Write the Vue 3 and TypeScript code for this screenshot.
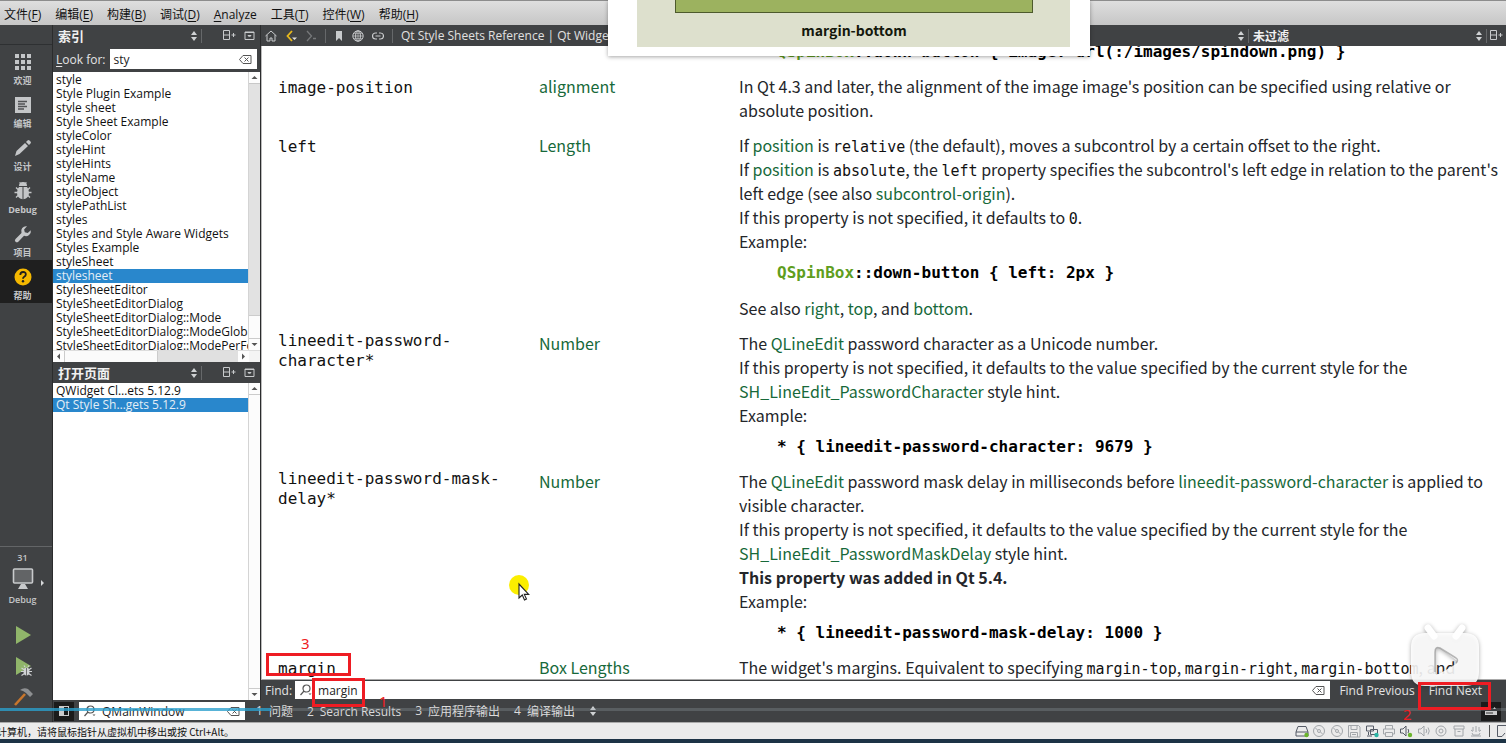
<script setup lang="ts">
import { ref } from 'vue'

interface MenuEntry { text: string; key?: string }
interface Mode { id: string; label: string }
interface Pane { n: number; label: string }

const menus: MenuEntry[] = [
  { text: '文件', key: 'F' },
  { text: '编辑', key: 'E' },
  { text: '构建', key: 'B' },
  { text: '调试', key: 'D' },
  { text: 'Analyze' },
  { text: '工具', key: 'T' },
  { text: '控件', key: 'W' },
  { text: '帮助', key: 'H' },
]

const modes: Mode[] = [
  { id: 'welcome', label: '欢迎' },
  { id: 'edit', label: '编辑' },
  { id: 'design', label: '设计' },
  { id: 'debug', label: 'Debug' },
  { id: 'projects', label: '项目' },
  { id: 'help', label: '帮助' },
]
const activeMode = ref('help')

const keywords: string[] = [
  'style', 'Style Plugin Example', 'style sheet', 'Style Sheet Example', 'styleColor',
  'styleHint', 'styleHints', 'styleName', 'styleObject', 'stylePathList', 'styles',
  'Styles and Style Aware Widgets', 'Styles Example', 'styleSheet', 'stylesheet',
  'StyleSheetEditor', 'StyleSheetEditorDialog', 'StyleSheetEditorDialog::Mode',
  'StyleSheetEditorDialog::ModeGlobal', 'StyleSheetEditorDialog::ModePerForm',
]
const activeKeyword = ref('stylesheet')

const openPages: string[] = ['QWidget Cl…ets 5.12.9', 'Qt Style Sh…gets 5.12.9']
const activePage = ref(1)

const panes: Pane[] = [
  { n: 1, label: '问题' },
  { n: 2, label: 'Search Results' },
  { n: 3, label: '应用程序输出' },
  { n: 4, label: '编译输出' },
]

const lookFor = ref('sty')
const findText = ref('margin')
const locator = ref('QMainWindow')
</script>

<template>
  <div class="app">
    <nav class="menubar">
      <button v-for="m in menus" :key="m.text" class="menu">
        <template v-if="m.key">{{ m.text }}(<u>{{ m.key }}</u>)</template>
        <template v-else><u>{{ m.text[0] }}</u>{{ m.text.slice(1) }}</template>
      </button>
    </nav>

    <div class="main">
      <aside class="modes">
        <div class="modes-top"></div>
        <button
          v-for="m in modes"
          :key="m.id"
          class="mode"
          :class="{ active: activeMode === m.id }"
          @click="activeMode = m.id"
        >
          <svg v-if="m.id === 'welcome'" width="20" height="20" viewBox="0 0 20 20" fill="#c4c6c8">
            <path d="M2 2h4v4H2zM8 2h4v4H8zM14 2h4v4h-4zM2 8h4v4H2zM8 8h4v4H8zM14 8h4v4h-4zM2 14h4v4H2zM8 14h4v4H8zM14 14h4v4h-4z" />
          </svg>
          <svg v-else-if="m.id === 'edit'" width="20" height="20" viewBox="0 0 20 20">
            <rect x="2" y="2" width="16" height="16" fill="#c4c6c8" />
            <path d="M5 6.500h9M5 9h7M5 11.500h9M5 14h6" stroke="#505254" stroke-width="1.600" />
          </svg>
          <svg v-else-if="m.id === 'design'" width="20" height="20" viewBox="0 0 20 20" fill="#c4c6c8">
            <path d="M2 18l1.500-5L12 5l3 3-8.500 8zM13 4l1.500-1.500q1-1 2 0l1 1q1 1 0 2L16 7z" />
          </svg>
          <svg v-else-if="m.id === 'debug'" width="20" height="20" viewBox="0 0 20 20" fill="#c4c6c8">
            <path d="M6 5a4 4 0 018 0zM9.500 6v12.200Q4 17.500 4 11.500 4 8 6 6zM10.500 6v12.200Q16 17.500 16 11.500 16 8 14 6z" />
            <path d="M5 8.500L3 6.500M5 11.500H1.500M5 14.500L3 16.500M15 8.500l2-2M15 11.500h3.500M15 14.500l2 2M8 2.500L6.500 1.500M12 2.500l1.500-1" stroke="#c4c6c8" stroke-width="1.300" />
          </svg>
          <svg v-else-if="m.id === 'projects'" width="20" height="20" viewBox="0 0 20 20" fill="#c4c6c8">
            <path d="M14 2.300a5 5 0 00-5.500 6.800L2.500 15q-1.300 1.500 0 2.700t2.800 0L11 11.800a5 5 0 006.800-5.600L14.700 9l-2.900-.700-.700-2.900z" />
          </svg>
          <svg v-else width="20" height="20" viewBox="0 0 20 20">
            <circle cx="10" cy="10" r="8.500" fill="#f5b800" />
            <path d="M7.300 8q0-3 2.800-3t2.700 2.500q0 1.300-1.600 2.300-1.200.800-1.200 2" fill="none" stroke="#1f1f1f" stroke-width="1.800" />
            <circle cx="10" cy="14.200" r="1.200" fill="#1f1f1f" />
          </svg>
          <span>{{ m.label }}</span>
        </button>
        <div class="grow"></div>
        <div class="kit">
          <span>31</span>
          <button class="kit-button" aria-label="Kit">
            <svg width="44" height="24" viewBox="0 0 44 24">
              <rect x="9.500" y="2" width="19" height="14" rx="1" fill="#626466" stroke="#c8cacc" stroke-width="1.600" />
              <path d="M17 17h4l3 5H14z" fill="#c8cacc" />
              <path d="M37 13v6l3-3z" fill="#d5d7d9" />
            </svg>
          </button>
          <span>Debug</span>
        </div>
        <button class="run" aria-label="Run">
          <svg width="20" height="20" viewBox="0 0 20 20"><path d="M3 1v18l15-9z" fill="#90b56a" /></svg>
        </button>
        <button class="run" aria-label="Start debugging">
          <svg width="20" height="20" viewBox="0 0 20 20">
            <path d="M3 0v18l15-9z" fill="#90b56a" />
            <ellipse cx="13.500" cy="14.500" rx="3" ry="4" fill="#d0d2d4" />
            <path d="M8.500 11l3 2M8 14.500h11M8.500 18.500l3-2M18.500 11l-3 2M18.500 18.500l-3-2M12 10l-1-1.500M15 10l1-1.500" stroke="#d0d2d4" stroke-width="1.200" />
            <path d="M13.500 11v8" stroke="#555" stroke-width=".800" />
          </svg>
        </button>
        <button class="build" aria-label="Build">
          <svg width="22" height="20" viewBox="0 0 22 20">
            <path d="M3 18L13 7" stroke="#c8762c" stroke-width="2.600" />
            <path d="M8 3q4-3 8-1l5 5-3 3-4-4q-2-2-6-3z" fill="#8d8f91" />
          </svg>
        </button>
      </aside>

      <div class="right">
        <div class="body">
          <section class="side">
            <header class="bar side-bar">
              <b class="title">索引</b>
              <svg class="updown" width="8" height="10" viewBox="0 0 8 10"><path d="M4 0l3 4H1zM4 10l3-4H1z" /></svg>
              <i class="sep"></i>
              <button class="tool split" aria-label="Split">
                <svg width="13" height="11" viewBox="0 0 13 11"><path d="M.500.500h6v9h-6zM.500 5h6M8.500 5h4M10.500 3v4" /></svg>
              </button>
              <button class="tool close" aria-label="Close">
                <svg width="11" height="11" viewBox="0 0 11 11"><path d="M1 2h9v7.500H1z" /><path d="M1 2.500h9M4 5.500h3l-1.500 1.500z" /></svg>
              </button>
            </header>
            <div class="look">
              <label for="look"><u>L</u>ook for:</label>
              <div class="field">
                <input id="look" v-model="lookFor" type="text" />
                <button class="clear" aria-label="Clear">
                  <svg width="13" height="9" viewBox="0 0 13 9"><path d="M4 .500h8v8H4l-3.500-4zM5.500 2.500l4 4M9.500 2.500l-4 4" /></svg>
                </button>
              </div>
            </div>
            <div class="listbox index-list">
              <ul>
                <li v-for="k in keywords" :key="k" :class="{ on: k === activeKeyword }" @click="activeKeyword = k">{{ k }}</li>
              </ul>
              <div class="vscroll">
                <svg class="arrow" width="11" height="11" viewBox="0 0 11 11"><path d="M2.500 7h6l-3-3z" /></svg>
                <div class="groove"></div>
                <div class="thumb"></div>
                <svg class="arrow" width="11" height="11" viewBox="0 0 11 11"><path d="M2.500 4h6l-3 3z" /></svg>
              </div>
            </div>
            <div class="hscroll">
              <svg width="11" height="11" viewBox="0 0 11 11"><path d="M7 2.500v6l-3-3z" /></svg>
              <div class="hthumb"></div>
              <div class="hgroove"></div>
              <svg width="11" height="11" viewBox="0 0 11 11"><path d="M4 2.500v6l3-3z" /></svg>
              <div class="corner"></div>
            </div>
            <header class="bar side-bar">
              <b class="title">打开页面</b>
              <svg class="updown" width="8" height="10" viewBox="0 0 8 10"><path d="M4 0l3 4H1zM4 10l3-4H1z" /></svg>
              <i class="sep"></i>
              <button class="tool split" aria-label="Split">
                <svg width="13" height="11" viewBox="0 0 13 11"><path d="M.500.500h6v9h-6zM.500 5h6M8.500 5h4M10.500 3v4" /></svg>
              </button>
              <button class="tool close" aria-label="Close">
                <svg width="11" height="11" viewBox="0 0 11 11"><path d="M1 2h9v7.500H1z" /><path d="M1 2.500h9M4 5.500h3l-1.500 1.500z" /></svg>
              </button>
            </header>
            <div class="listbox pages-list">
              <ul>
                <li v-for="(p, i) in openPages" :key="p" :class="{ on: i === activePage }" @click="activePage = i">{{ p }}</li>
              </ul>
              <div class="vscroll">
                <svg class="arrow" width="11" height="11" viewBox="0 0 11 11"><path d="M2.500 7h6l-3-3z" /></svg>
                <div class="thumb full"></div>
                <svg class="arrow" width="11" height="11" viewBox="0 0 11 11"><path d="M2.500 4h6l-3 3z" /></svg>
              </div>
            </div>
          </section>

          <section class="doc">
            <header class="bar doc-bar">
              <button class="tool" aria-label="Home">
                <svg width="12" height="12" viewBox="0 0 12 12"><path d="M.500 6L6 1l5.500 5M2 5v6h3V8h2v3h3V5" /></svg>
              </button>
              <button class="tool back" aria-label="Back">
                <svg width="12" height="12" viewBox="0 0 12 12"><path d="M7 1L2.500 6 7 11" stroke-width="1.800" /><path d="M7 7.500h5L9.500 10z" /></svg>
              </button>
              <button class="tool dim" aria-label="Forward">
                <svg width="12" height="12" viewBox="0 0 12 12"><path d="M2 1l4.500 5L2 11M8 8.500h3" stroke-width="1.300" /></svg>
              </button>
              <i class="sep"></i>
              <button class="tool mark-tool" aria-label="Bookmark">
                <svg width="10" height="12" viewBox="0 0 10 12"><path d="M2 1h6v10L5 8l-3 3z" /></svg>
              </button>
              <button class="tool" aria-label="Online">
                <svg width="12" height="12" viewBox="0 0 12 12"><circle cx="6" cy="6" r="5.200" /><ellipse cx="6" cy="6" rx="2.400" ry="5.200" /><path d="M1 6h10M6 1v10M2 3.300h8M2 8.700h8" stroke-width=".700" /></svg>
              </button>
              <button class="tool" aria-label="Link">
                <svg width="12" height="12" viewBox="0 0 12 12"><path d="M5 3H3.500a3 3 0 000 6H5M7 3h1.500a3 3 0 010 6H7M3.500 6h5" stroke-width="1.200" /></svg>
              </button>
              <i class="sep"></i>
              <span class="page-title">Qt Style Sheets Reference | Qt Widgets 5.12.9</span>
              <svg class="updown" width="8" height="10" viewBox="0 0 8 10"><path d="M4 0l3 4H1zM4 10l3-4H1z" /></svg>
              <i class="sep"></i>
              <b class="filter">未过滤</b>
              <svg class="updown" width="8" height="10" viewBox="0 0 8 10"><path d="M4 0l3 4H1zM4 10l3-4H1z" /></svg>
              <i class="sep"></i>
              <button class="tool" aria-label="Split">
                <svg width="13" height="11" viewBox="0 0 13 11"><path d="M.500.500h6v9h-6zM.500 5h6M8.500 5h4M10.500 3v4" /></svg>
              </button>
            </header>

            <div class="view">
              <table>
                <colgroup><col class="c-name" /><col class="c-type" /><col /></colgroup>
                <tbody>
                  <tr>
                    <td></td>
                    <td></td>
                    <td><pre class="first"><span class="cls">QSpinBox</span>::down-button { image: url(:/images/spindown.png) }</pre></td>
                  </tr>
                  <tr>
                    <td><code>image-position</code></td>
                    <td><a href="#alignment">alignment</a></td>
                    <td>In Qt 4.3 and later, the alignment of the image image's position can be specified using relative or<br />absolute position.</td>
                  </tr>
                  <tr>
                    <td><code>left</code></td>
                    <td><a href="#length">Length</a></td>
                    <td>
                      <p>If <a href="#position">position</a> is <code>relative</code> (the default), moves a subcontrol by a certain offset to the right.</p>
                      <p>If <a href="#position">position</a> is <code>absolute</code>, the <code>left</code> property specifies the subcontrol's left edge in relation to the parent's<br />left edge (see also <a href="#subcontrol-origin">subcontrol-origin</a>).</p>
                      <p>If this property is not specified, it defaults to <code>0</code>.</p>
                      <p>Example:</p>
                      <pre><span class="cls">QSpinBox</span>::down-button { left: 2px }</pre>
                      <p class="after">See also <a href="#right">right</a>, <a href="#top">top</a>, and <a href="#bottom">bottom</a>.</p>
                    </td>
                  </tr>
                  <tr>
                    <td class="wrapped"><code>lineedit-password-<br />character*</code></td>
                    <td><a href="#number">Number</a></td>
                    <td>
                      <p>The <a href="#qlineedit">QLineEdit</a> password character as a Unicode number.</p>
                      <p>If this property is not specified, it defaults to the value specified by the current style for the<br /><a href="#char">SH_LineEdit_PasswordCharacter</a> style hint.</p>
                      <p>Example:</p>
                      <pre>* { lineedit-password-character: 9679 }</pre>
                    </td>
                  </tr>
                  <tr>
                    <td class="wrapped"><code>lineedit-password-mask-<br />delay*</code></td>
                    <td><a href="#number">Number</a></td>
                    <td>
                      <p>The <a href="#qlineedit">QLineEdit</a> password mask delay in milliseconds before <a href="#lpc">lineedit-password-character</a> is applied to<br />visible character.</p>
                      <p>If this property is not specified, it defaults to the value specified by the current style for the<br /><a href="#delay">SH_LineEdit_PasswordMaskDelay</a> style hint.</p>
                      <p><b>This property was added in Qt 5.4.</b></p>
                      <p>Example:</p>
                      <pre>* { lineedit-password-mask-delay: 1000 }</pre>
                    </td>
                  </tr>
                  <tr>
                    <td><code>margin</code></td>
                    <td><a href="#box-lengths">Box Lengths</a></td>
                    <td><p>The widget's margins. Equivalent to specifying <code>margin-top</code>, <code>margin-right</code>, <code>margin-bottom</code>, and</p></td>
                  </tr>
                </tbody>
              </table>
            </div>

            <div class="findbar">
              <label for="find">Find:</label>
              <div class="field">
                <svg class="lens" width="14" height="12" viewBox="0 0 14 12"><circle cx="7.500" cy="4.500" r="3.500" /><path d="M5 7L1.500 11" /><path d="M9.500 9.500h3l-1.500 1.500z" class="solid" /></svg>
                <input id="find" v-model="findText" type="text" />
                <button class="clear" aria-label="Clear">
                  <svg width="13" height="9" viewBox="0 0 13 9"><path d="M4 .500h8v8H4l-3.500-4zM5.500 2.500l4 4M9.500 2.500l-4 4" /></svg>
                </button>
              </div>
              <button class="find-btn">Find Previous</button>
              <button class="find-btn">Find Next</button>
            </div>
          </section>
        </div>

        <footer class="output">
          <button class="black" aria-label="Toggle sidebar">
            <svg width="10" height="10" viewBox="0 0 10 10"><rect x=".500" y=".500" width="9" height="9" fill="#1b1b1b" stroke="#ccc" /><path d="M1 1h4v8H1z" fill="#ccc" /></svg>
          </button>
          <div class="field locator">
            <svg class="lens" width="14" height="12" viewBox="0 0 14 12"><circle cx="7.500" cy="4.500" r="3.500" /><path d="M5 7L1.500 11" /><path d="M9.500 9.500h3l-1.500 1.500z" class="solid" /></svg>
            <input v-model="locator" type="text" aria-label="Locator" />
            <button class="clear" aria-label="Clear">
              <svg width="13" height="9" viewBox="0 0 13 9"><path d="M4 .500h8v8H4l-3.500-4zM5.500 2.500l4 4M9.500 2.500l-4 4" /></svg>
            </button>
          </div>
          <button v-for="p in panes" :key="p.n" class="pane"><span>{{ p.n }}</span><span>{{ p.label }}</span></button>
          <svg class="updown" width="8" height="10" viewBox="0 0 8 10"><path d="M4 0l3 4H1zM4 10l3-4H1z" /></svg>
          <div class="grow"></div>
          <button class="black end" aria-label="Toggle output">
            <svg width="12" height="10" viewBox="0 0 12 10"><path d="M0 5h12v4H0z" fill="#ccc" /><path d="M1 7h7" stroke="#333" /><path d="M8 3l1.500-2L11 3z" fill="#ccc" /></svg>
          </button>
        </footer>
      </div>
    </div>

    <div class="status">
      <span class="hint">计算机，请将鼠标指针从虚拟机中移出或按 Ctrl+Alt。</span>
      <div class="grow"></div>
      <div class="devices">
        <svg width="14" height="14" viewBox="0 0 14 14"><path d="M3 2.500h8l2 5.500v4H1V8zM1 8h12" class="strong" /><circle cx="11.500" cy="11" r="2.200" fill="#6ab52c" stroke="none" /></svg>
        <svg width="14" height="14" viewBox="0 0 14 14"><circle cx="7" cy="7" r="5.500" /><circle cx="7" cy="7" r="1.500" /><path d="M3.500 4l2 2M8.500 8l2 2" /></svg>
        <svg width="14" height="14" viewBox="0 0 14 14"><circle cx="7" cy="7" r="5.500" /><circle cx="7" cy="7" r="1.500" /><path d="M3.500 4l2 2M8.500 8l2 2" /></svg>
        <svg width="14" height="14" viewBox="0 0 14 14"><path d="M1.500 1.500h10l1.500 1.500v10H1.500zM4 1.500v4h6v-4M3.500 13V8.500h7V13M5 10.500h4" /></svg>
        <svg width="14" height="14" viewBox="0 0 14 14"><path d="M1.500 2h7v5h-7zM5.500 5.500h7v5h-7zM2 12h5M3.500 8v3" class="strong" /><circle cx="11.500" cy="11" r="2.200" fill="#2bb5a5" stroke="none" /></svg>
        <svg width="14" height="14" viewBox="0 0 14 14"><path d="M3.500 5V1.500h7V5M3.500 10h-2V5h11v5h-2M3.500 8.500h7v4h-7z" /></svg>
        <svg width="14" height="14" viewBox="0 0 14 14"><path d="M1.500 5H4l3-3v10L4 9H1.500zM9 5q1.500 2 0 4" class="strong" /><circle cx="11" cy="11" r="2.200" fill="#6ab52c" stroke="none" /></svg>
        <svg width="14" height="14" viewBox="0 0 14 14"><path d="M1.500 5H4l3-3v10L4 9H1.500zM9 5q1.500 2 0 4M11 3.500q2.500 3.500 0 7" /></svg>
        <svg width="14" height="14" viewBox="0 0 14 14"><circle cx="7" cy="7" r="5" /><circle cx="7" cy="7" r="2" /></svg>
        <svg width="14" height="14" viewBox="0 0 14 14"><path d="M2 2h10v3H2zM3 5v7h8V5M5.500 7.500h3" /></svg>
        <svg width="14" height="14" viewBox="0 0 14 14"><path d="M2 12h10M3 9l1 2h6l1-2M4 3v4M7 2v6M10 3v4M2 6l2 1.500M12 6l-2 1.500" /></svg>
      </div>
      <i class="status-sep"></i>
      <svg class="note" width="10" height="14" viewBox="0 0 10 14"><path d="M10 1.500H1.500v11H6L9 9" /></svg>
    </div>
    <div class="taskbar"></div>

    <!-- box-model figure floating above the page -->
    <figure class="figure">
      <div class="figure-margin">
        <div class="figure-border"></div>
        <figcaption>margin-bottom</figcaption>
      </div>
    </figure>

    <!-- pointer with click highlight -->
    <svg class="pointer" width="24" height="30" viewBox="0 0 24 30">
      <circle cx="11" cy="11" r="10" fill="#fbee00" />
      <path d="M11 10v14l3.300-3 2.200 5 2-1-2.200-4.600h4.400z" fill="#fff" stroke="#222" stroke-width="1.100" />
    </svg>

    <!-- playback progress -->
    <div class="progress"><div class="played"></div></div>

    <svg class="player" width="80" height="74" viewBox="0 0 80 74">
      <g fill="#fff" fill-opacity=".88" stroke="none">
        <path d="M23 9l6 8M57 9l-6 8" stroke="#fff" stroke-width="7" stroke-linecap="round" />
        <path fill-rule="evenodd" d="M20 14h40q14 0 14 14v25q0 14-14 14H20Q6 67 6 53V28q0-14 14-14zM30 33v20q0 4 4 2l17-10q3-2 0-4L35 29q-5-2-5 4z" />
      </g>
      <path d="M30 53V33q0-6 5-4l16 10q3 2 0 5" fill="none" stroke="#999" stroke-opacity=".7" stroke-width="1.500" />
    </svg>

    <div class="mark mark-a"></div>
    <div class="mark mark-b"></div>
    <div class="mark mark-c"></div>
    <span class="num num-1">1</span>
    <span class="num num-2">2</span>
    <span class="num num-3">3</span>
  </div>
</template>

<style>
html, body { margin: 0; overflow: hidden; }
</style>

<style scoped>
* { box-sizing: border-box; }
.app {
  position: relative;
  display: flex;
  flex-direction: column;
  height: 100vh;
  overflow: hidden;
  background: #404244;
  font-family: "Open Sans", "Noto Sans CJK SC", sans-serif;
  font-size: 12px;
  color: #111;
}
button { border: 0; padding: 0; margin: 0; background: none; font: inherit; color: inherit; white-space: nowrap; }
svg { display: block; flex: none; }
.grow { flex: 1; }

.menubar {
  display: flex;
  flex: none;
  gap: 14px;
  height: 25px;
  padding: 3px 4px 0;
  border-top: 1px solid #8c8c8c;
  background: linear-gradient(#dedede, #c6c6c6);
  line-height: 20px;
}
u { text-underline-offset: 2px; }

.main { display: flex; flex: 1; min-height: 0; }
.modes { display: flex; flex: none; flex-direction: column; width: 53px; padding-right: 7px; border-right: 1px solid #2b2c2d; color: #c4c6c8; font-size: 9px; font-weight: 700; }
.modes-top { flex: none; height: 20px; margin-right: -7px; border-bottom: 1px solid #2e3032; }
.mode { display: flex; flex: none; flex-direction: column; align-items: center; gap: 2px; height: 43px; margin-right: -7px; padding: 7px 7px 0 0; line-height: 14px; }
.mode.active { background: #1f1f1f; }
.kit { display: flex; flex: none; flex-direction: column; align-items: center; height: 65px; margin: 0 -7px 8px 0; padding: 4px 7px 0 0; border-top: 1px solid #636567; line-height: 14px; font-weight: 600; }
.kit-button { margin: 2px 0 2px 7px; }
.run, .build { display: flex; flex: none; justify-content: center; align-items: center; height: 32px; }
.build { height: 39px; align-items: flex-start; padding-top: 4px; }

.right { display: flex; flex: 1; flex-direction: column; min-width: 0; }
.body { display: flex; flex: 1; min-height: 0; }
.bar { display: flex; flex: none; align-items: center; height: 21px; color: #f0f0f0; }
.updown { fill: #d0d2d4; }
.sep { flex: none; width: 1px; height: 14px; background: #66686a; }
.tool svg { fill: none; stroke: #c8cacc; }
.tool.back path:first-child { stroke: #e8b91c; }
.tool.back path:last-child { fill: #e0e0e0; stroke: none; }
.tool.dim path { stroke: #76787a; }
.tool.mark-tool path { fill: #c8cacc; stroke: none; }

.side { display: flex; flex: none; flex-direction: column; width: 208px; border-right: 1px solid #2b2c2d; }
.side-bar { gap: 3px; padding: 0 5px; }
.side-bar .title { flex: 1; font-size: 13px; }
.side-bar .split { margin-left: 18px; }
.side-bar .close { margin-left: 5px; }
.look { display: flex; flex: none; align-items: center; gap: 5px; height: 26px; padding: 0 3px; color: #e4e4e4; }
.field { display: flex; flex: 1; align-items: center; height: 20px; min-width: 0; background: #fff; }
.field input { flex: 1; min-width: 0; height: 18px; padding: 0 0 0 3px; border: 0; outline: 0; background: none; font: inherit; color: #222; }
.lens + input { padding-left: 5px; }
.clear { margin-right: 5px; }
.clear svg { fill: none; stroke: #555; }
.lens { margin-left: 4px; fill: none; stroke: #555; stroke-width: 1.2; }
.lens .solid { fill: #555; stroke: none; }

.listbox { display: flex; background: #fff; overflow: hidden; }
.index-list { flex: none; height: 278px; }
.pages-list { flex: 1; min-height: 0; }
.listbox ul { flex: 1; min-width: 0; margin: 0; padding: 1px 0 0; list-style: none; overflow: hidden; }
.listbox li { height: 14px; padding-left: 3px; line-height: 14px; white-space: nowrap; }
.listbox li.on { background: #2987cc; color: #e4eef6; }
.vscroll { display: flex; flex: none; flex-direction: column; width: 12px; border-left: 1px solid #d4d4d4; background: #f6f6f6; }
.arrow, .hscroll svg { fill: #555; background: #fdfdfd; }
.groove { flex: 1; border-top: 1px solid #c8c8c8; background: #e2e2e2; }
.thumb { height: 24px; border: solid #ccc; border-width: 1px 0; background: #fcfcfc; }
.thumb.full { flex: 1; height: auto; }
.hscroll { display: flex; flex: none; height: 12px; border-top: 1px solid #ddd; background: #f4f4f4; }
.hthumb { flex: 93; border: solid #ccc; border-width: 0 1px; background: #fbfbfb; }
.hgroove { flex: 81; background: #e0e0e0; }
.corner { width: 11px; }

.doc { display: flex; flex: 1; flex-direction: column; min-width: 0; }
.doc-bar { gap: 8px; padding: 0 3px 0 4px; }
.doc-bar .updown { margin-right: -5px; }
.doc-bar .tool:last-child { margin-left: -5px; }
.page-title { flex: 1; color: #e0e0e0; white-space: nowrap; }
.filter { width: 214px; margin-left: -4px; }
.view { flex: 1; min-height: 0; overflow: hidden; border-left: 1px solid #bbb; border-bottom: 1px solid #aaa; background: #fff; }
table { width: 100%; margin-top: -5px; border-collapse: collapse; table-layout: fixed; font-family: "Noto Sans CJK SC", sans-serif; font-size: 16px; line-height: 24px; color: #24262a; }
.c-name { width: 277px; }
.c-type { width: 200px; }
td { padding: 0 0 11px; vertical-align: top; white-space: nowrap; }
td:first-child { padding-left: 16px; }
td p { margin: 0; }
td a { color: #17693a; text-decoration: none; }
code, pre { font-family: "DejaVu Sans Mono", monospace; font-size: 16px; color: #111; }
code { line-height: 20px; }
p code { font-size: 15px; }
.wrapped { font-family: "DejaVu Sans Mono", monospace; line-height: 20px; }
pre { margin: 9px 0 0 38px; line-height: 22px; font-weight: 700; color: #000; }
pre.first { margin-top: 0; }
.cls { color: #5f9e1e; }
.after { margin-top: 12px; }

.findbar { display: flex; flex: none; align-items: center; height: 20px; padding: 0 24px 0 4px; color: #e4e4e4; }
.findbar .field { margin: 0 9px 0 3px; height: 18px; }
.find-btn + .find-btn { margin-left: 14px; }

.output { display: flex; flex: none; align-items: center; height: 22px; color: #dcdcdc; }
.black { display: flex; flex: none; align-items: center; justify-content: center; width: 20px; height: 19px; margin-left: 1px; background: #1b1b1b; }
.black.end { margin-right: 5px; }
.locator { flex: none; width: 166px; height: 18px; margin: 0 11px 0 5px; }
.pane { display: flex; gap: 6px; margin-right: 14px; }

.status { display: flex; flex: none; align-items: center; height: 17px; border-top: 1px solid #aaa; background: #ebebeb; overflow: hidden; }
.hint { margin-left: -3px; font-family: "Noto Sans CJK SC", sans-serif; font-size: 10px; white-space: nowrap; }
.devices { display: flex; justify-content: space-between; width: 188px; fill: none; stroke: #a2a6aa; }
.devices .strong { stroke: #555b66; }
.status-sep { width: 1px; height: 12px; margin: 0 6px; background: #555; }
.note { fill: none; stroke: #555b66; }
.taskbar { flex: none; height: 4px; background: #1d3346; }

.figure { position: absolute; top: 0; left: 608px; width: 482px; height: 56px; margin: 0; padding: 0 20px 9px 29px; background: #fff; box-shadow: 0 1px 4px rgba(0, 0, 0, .35); }
.figure-margin { height: 47px; padding: 0 37px 0 38px; background: #dde0cd; text-align: center; }
.figure-border { height: 13px; border: 1px solid #4d5a2c; border-top: 0; background: #9cb25f; }
figcaption { font-family: "Noto Sans CJK SC", sans-serif; font-size: 14px; font-weight: 700; line-height: 34px; color: #14180c; }
.pointer { position: absolute; left: 508px; top: 574px; }
.progress { position: absolute; left: 0; right: 0; bottom: 32px; height: 3px; background: rgba(150, 160, 165, .3); }
.played { width: 18%; height: 3px; background: rgba(30, 160, 210, .7); }
.player { position: absolute; right: 21px; bottom: 50px; filter: drop-shadow(0 1px 2px rgba(0, 0, 0, .35)); }
.mark { position: absolute; border: 3px solid #ee1c23; }
.mark-a { left: 266px; top: 653px; width: 85px; height: 23px; }
.mark-b { left: 312px; top: 678px; width: 53px; height: 29px; }
.mark-c { left: 1418px; top: 682px; width: 73px; height: 28px; }
.num { position: absolute; font-family: "Noto Sans", sans-serif; font-size: 15px; line-height: 16px; color: #ee1c23; }
.num-1 { left: 379px; top: 693px; }
.num-2 { left: 1403px; top: 706px; }
.num-3 { left: 301px; top: 635px; }
</style>
